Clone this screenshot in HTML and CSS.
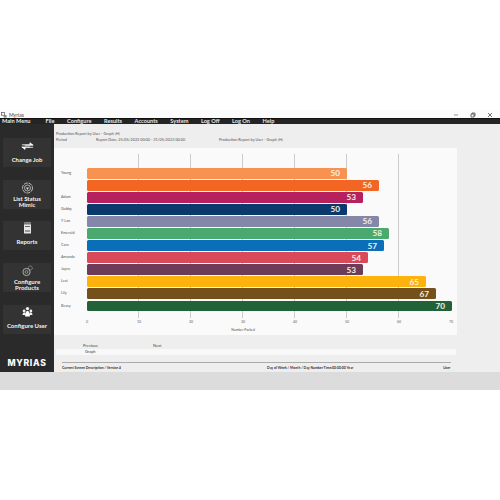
FILE: index.html
```html
<!DOCTYPE html>
<html lang="en">
<head>
<meta charset="utf-8">
<title>Myrias</title>
<link rel="stylesheet" href="styles.css">
</head>
<body>
<div class="window">
  <header class="titlebar">
    <div class="title">
      <svg class="appicon" viewBox="0 0 6 6"><rect x="0.4" y="0.4" width="3.2" height="2.8" fill="#fff" stroke="#555" stroke-width=".7"/><rect x="2.6" y="3" width="3" height="2.6" fill="#888"/></svg>
      <span>Myrias</span>
    </div>
    <div class="controls">
      <svg viewBox="0 0 6 6"><path d="M1 3H5" stroke="#666" stroke-width=".7"/></svg>
      <svg viewBox="0 0 6 6"><path d="M1 2H4V5H1ZM2 2V1H5V4H4" fill="none" stroke="#333" stroke-width=".7"/></svg>
      <svg viewBox="0 0 6 6"><path d="M1 1L5 5M5 1L1 5" stroke="#333" stroke-width=".7"/></svg>
    </div>
  </header>
  <nav class="menubar">
    <span class="menu-main">Main Menu</span>
    <span>File</span><span>Configure</span><span>Results</span><span>Accounts</span><span>System</span><span>Log Off</span><span>Log On</span><span>Help</span>
  </nav>
  <div class="body">
    <aside class="sidebar">
      <div class="buttons">
        <button class="navbtn single first">
          <svg viewBox="0 0 16 12"><path d="M1 4.6H11V2L15 5H5M15 7.6H5V10.2L1 7.2H11" fill="#fff" stroke="#fff" stroke-width=".9" stroke-linejoin="round"/></svg>
          <span>Change Job</span>
        </button>
        <button class="navbtn">
          <svg viewBox="0 0 12 12"><circle cx="6" cy="6" r="5" fill="none" stroke="#ddd" stroke-width=".8" stroke-dasharray="4 .8"/><circle cx="6" cy="6" r="3" fill="none" stroke="#ddd" stroke-width=".7"/><path d="M4.5 5.5H7.5L6 8Z" fill="#ddd"/></svg>
          <span>List Status<br>Mimic</span>
        </button>
        <button class="navbtn single">
          <svg viewBox="0 0 12 12"><rect x="2.5" y="0.5" width="7" height="11" rx=".6" fill="#e6e6e6"/><rect x="2.5" y="0.5" width="7" height="2" fill="#777"/><rect x="3.5" y="4" width="5" height="1" fill="#666"/><rect x="3.5" y="8" width="5" height="2" fill="#999"/></svg>
          <span>Reports</span>
        </button>
        <button class="navbtn">
          <svg viewBox="0 0 12 12"><circle cx="5" cy="7" r="3.6" fill="none" stroke="#ccc" stroke-width=".8"/><circle cx="5" cy="7" r="1.4" fill="none" stroke="#ccc" stroke-width=".6"/><circle cx="8.8" cy="3" r="2" fill="none" stroke="#aaa" stroke-width="1" stroke-dasharray="1 .6"/></svg>
          <span>Configure<br>Products</span>
        </button>
        <button class="navbtn single">
          <svg viewBox="0 0 12 12"><circle cx="6" cy="2.6" r="1.7" fill="#eee"/><circle cx="2.6" cy="5" r="1.4" fill="#eee"/><circle cx="9.4" cy="5" r="1.4" fill="#eee"/><path d="M1 9C1 7 2 6.6 3.4 6.6L4.5 9ZM11 9C11 7 10 6.6 8.6 6.6L7.5 9Z" fill="#eee"/><path d="M3.6 10.5C3.6 6.5 4.6 5 6 5S8.4 6.5 8.4 10.5Z" fill="#fff"/></svg>
          <span>Configure User</span>
        </button>
      </div>
      <div class="brand">MYRIAS</div>
    </aside>
    <main class="content">
      <section class="report-head">
        <div class="head-line">Production Report by User - Graph [H]</div>
        <div class="head-row">
          <span class="period">Period</span>
          <span class="date">Report Date: 25/05/2023 00:00 - 31/05/2023 00:00</span>
          <span>Production Report by User - Graph [H]</span>
        </div>
      </section>
      <section class="chart">
        <div class="plot">
          <div class="gridlines"><i></i><i></i><i></i><i></i><i></i><i></i></div>
          <div class="row"><span class="name">Young</span><div class="bar c1" style="width:260px"><b>50</b></div></div>
          <div class="row"><span class="name"></span><div class="bar c2" style="width:292px"><b>56</b></div></div>
          <div class="row"><span class="name">Adam</span><div class="bar c3" style="width:276px"><b>53</b></div></div>
          <div class="row"><span class="name">Gabby</span><div class="bar c4" style="width:260px"><b>50</b></div></div>
          <div class="row"><span class="name">Y Lan</span><div class="bar c5" style="width:292px"><b>56</b></div></div>
          <div class="row"><span class="name">Emerald</span><div class="bar c6" style="width:302px"><b>58</b></div></div>
          <div class="row"><span class="name">Cara</span><div class="bar c7" style="width:297px"><b>57</b></div></div>
          <div class="row"><span class="name">Amanda</span><div class="bar c8" style="width:281px"><b>54</b></div></div>
          <div class="row"><span class="name">Jayne</span><div class="bar c9" style="width:276px"><b>53</b></div></div>
          <div class="row"><span class="name">Lexi</span><div class="bar c10" style="width:339px"><b>65</b></div></div>
          <div class="row"><span class="name">Lily</span><div class="bar c11" style="width:349px"><b>67</b></div></div>
          <div class="row"><span class="name">Bessy</span><div class="bar c12" style="width:365px"><b>70</b></div></div>
        </div>
        <div class="axis"><span>0</span><span>10</span><span>20</span><span>30</span><span>40</span><span>50</span><span>60</span><span>70</span></div>
        <div class="axis-title">Number Packed</div>
      </section>
      <section class="pager">
        <div class="pager-row"><span class="prev">Previous</span><span>Next</span></div>
        <div class="graph-row">Graph</div>
      </section>
      <footer class="status">
        <span>Current Screen Description / Version #</span>
        <span class="status-mid">Day of Week / Month / Day Number Time:00:00:00 Year</span>
        <span>User</span>
      </footer>
    </main>
  </div>
</div>
<div class="taskstrip"></div>
</body>
</html>
```
FILE: styles.css
```css
* { box-sizing: border-box; }
html, body { margin: 0; background: #fff; }
body { padding-top: 110px; width: 500px; height: 500px; overflow: hidden; font-family: "Lato", "Liberation Sans", sans-serif; }

.window { height: 262px; display: flex; flex-direction: column; background: #eee; }

.titlebar { height: 8px; background: #fbfbfb; display: flex; justify-content: space-between; align-items: center; padding: 1px 7px 0 1px; }
.title { display: flex; align-items: center; gap: 2px; font-size: 5px; color: #444; }
.appicon { width: 6px; height: 6px; }
.controls { display: flex; gap: 11px; }
.controls svg { width: 6px; height: 6px; }

.menubar { height: 6px; background: #242424; border-top: 1px solid #111; display: flex; align-items: flex-start; gap: 12.6px; padding-left: 2px; font-size: 5.6px; font-weight: 700; color: #e8e8e8; white-space: nowrap; line-height: 4.4px; }
.menu-main { margin-right: 2.4px; }

.body { flex: 1; display: flex; min-height: 0; }

.sidebar { width: 54px; background: #2a2a2a; display: flex; flex-direction: column; padding: 14px 3px 0; }
.buttons { display: flex; flex-direction: column; gap: 12.7px; }
.navbtn { width: 48px; height: 29px; background: #333; border: 0; padding: 2px 0 0; color: #f2f2f2; font: 700 6px/6px "Lato", "Liberation Sans", sans-serif; display: flex; flex-direction: column; align-items: center; gap: 2px; white-space: nowrap; }
.navbtn svg { width: 13px; height: 12px; flex: none; }
.single { padding-top: 1px; gap: 5px; }
.first { padding-top: 2px; }
.brand { margin-top: 24px; text-align: center; font: 800 8.6px/10px "Inter", "Liberation Sans", sans-serif; letter-spacing: .7px; color: #fff; }

.content { flex: 1; min-width: 0; display: flex; flex-direction: column; }

.report-head { height: 24px; padding: 7px 0 0 2px; font-size: 3.8px; line-height: 6px; color: #555; }
.head-row { display: flex; }
.period { width: 40px; }
.date { width: 123px; }

.chart { width: 403px; height: 187px; background: #fafafa; padding-top: 6px; }
.plot { position: relative; height: 164px; padding-top: 14px; }
.gridlines { position: absolute; left: 33px; top: 0; bottom: 0; display: flex; }
.gridlines i { width: 52px; border-right: 1px solid #ccc; }
.row { position: relative; height: 12.05px; display: flex; align-items: flex-start; }
.name { width: 33px; padding-left: 7px; font-size: 3.8px; line-height: 10.5px; color: #555; }
.bar { height: 10.5px; border-radius: 1.5px; display: flex; align-items: center; justify-content: flex-end; padding-right: 7px; }
.bar b { font-size: 8.2px; font-weight: 700; line-height: 10px; color: #f5efe6; }
.c1 { background: #f79250; }
.c2 { background: #f26522; }
.c3 { background: #b5215f; }
.c4 { background: #0a3a6b; }
.c5 { background: #8487a8; }
.c6 { background: #4aa96c; }
.c7 { background: #0a6fb8; }
.c8 { background: #d9495a; }
.c9 { background: #6d3c58; }
.c10 { background: #fdb20e; }
.c11 { background: #74501a; }
.c12 { background: #236239; }

.axis { display: flex; height: 8px; padding-left: 7px; font-size: 3.6px; line-height: 8px; color: #666; }
.axis span { width: 52px; text-align: center; flex: none; }
.axis-title { width: 378px; text-align: center; font-size: 3.4px; line-height: 8px; color: #555; }

.pager { height: 27px; font-size: 3.9px; color: #444; }
.pager-row { height: 14px; padding: 8px 0 0 29px; display: flex; line-height: 5px; }
.prev { width: 70px; }
.graph-row { width: 400px; margin-left: 2px; height: 6px; background: #f8f8f8; line-height: 6px; padding-left: 29px; }

.status { margin: 0 49px 0 8px; height: 10px; border-top: 1px solid #aaa; display: flex; align-items: center; font-size: 3.45px; font-weight: 700; color: #333; white-space: nowrap; }
.status-mid { margin-left: 146px; margin-right: 90px; }

.taskstrip { height: 18px; background: #dcdcdc; }
```
